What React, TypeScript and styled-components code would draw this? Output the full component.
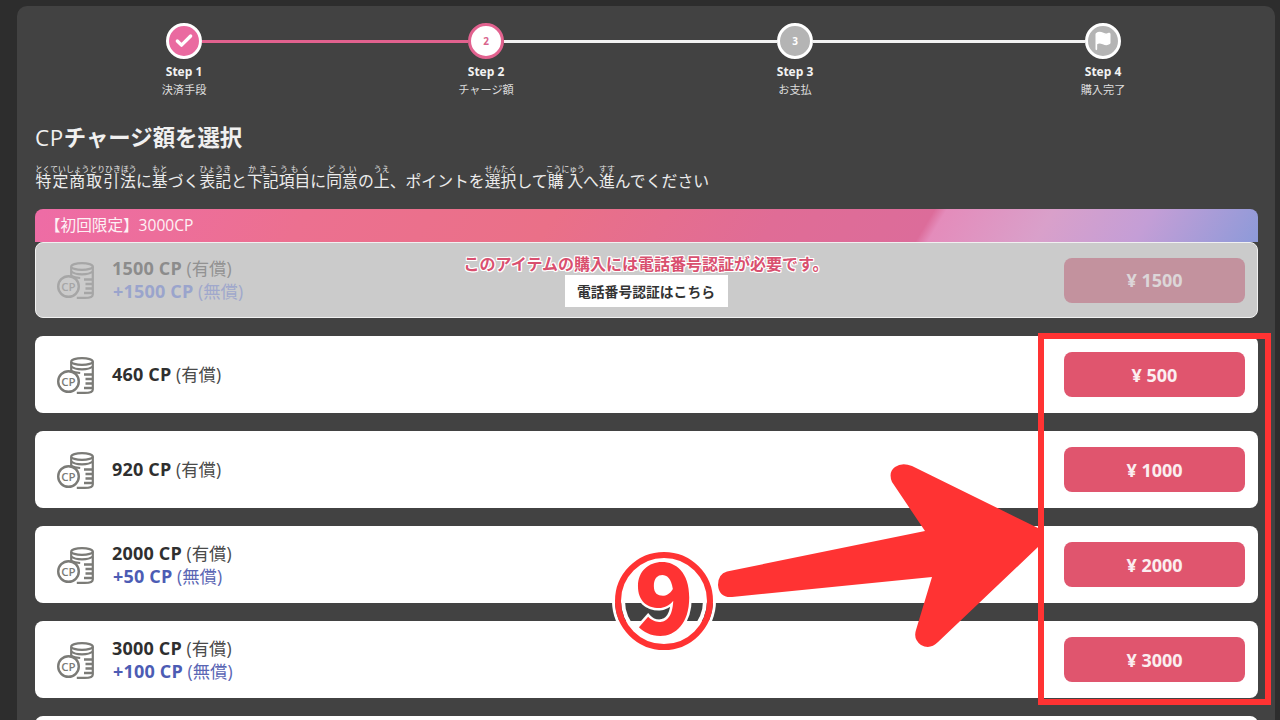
import * as React from 'react'
import styled, { createGlobalStyle } from 'styled-components'
import { Check, Flag } from 'lucide-react'

const FONT = `"Open Sans", "Noto Sans CJK JP", sans-serif`

const GlobalStyle = createGlobalStyle`
  html, body {
    margin: 0;
    height: 720px;
    overflow: hidden;
    background: #2d2d2d;
    font-family: ${FONT};
  }
`

const Page = styled.div`
  position: relative;
  width: 1280px;
  height: 720px;
  overflow: hidden;
  padding: 6px 5px 0 17px;
  box-sizing: border-box;
`

const Panel = styled.main`
  background: #424242;
  border-radius: 10px 10px 0 0;
  padding: 17px 17px 0 19px;
  height: 800px;
  color: #fff;
`

const Stepper = styled.div`
  display: flex;
  padding-left: 130px;
  height: 76px;
`

const StepItem = styled.div`
  width: 36px;
  flex: none;
  display: flex;
  flex-direction: column;
  align-items: center;
`

const Circle = styled.div<{ $kind: 'done' | 'active' | 'todo' }>`
  width: 36px;
  height: 36px;
  flex: none;
  box-sizing: border-box;
  border-radius: 50%;
  border: 3px solid ${p => (p.$kind === 'active' ? '#e2628f' : '#fff')};
  background: ${p => (p.$kind === 'done' ? '#ea6aa0' : p.$kind === 'active' ? '#fff' : '#b4b4b4')};
  color: ${p => (p.$kind === 'active' ? '#d9648c' : '#fff')};
  display: flex;
  align-items: center;
  justify-content: center;
  font-size: 10px;
  font-weight: 700;
`

const StepName = styled.div`
  margin-top: 5px;
  font-size: 12px;
  line-height: 16px;
  font-weight: 700;
  white-space: nowrap;
  color: #f2f2f2;
`

const StepSub = styled.div`
  margin-top: 3px;
  font-size: 11.2px;
  line-height: 14px;
  white-space: nowrap;
  color: #dedede;
`

const Connector = styled.div<{ $done?: boolean; $width: number }>`
  width: ${p => p.$width}px;
  flex: none;
  height: 3px;
  margin-top: 17px;
  background: ${p => (p.$done ? '#e2628f' : '#f2f2f2')};
`

const Title = styled.h1`
  margin: 24px 0 0 -1px;
  font-size: 22.4px;
  line-height: 30px;
  font-weight: 700;
  color: #f0f0f0;
`

const TitleLatin = styled.span`
  font-weight: 500;
  letter-spacing: 0.6px;
`

const Lead = styled.p`
  margin: 12px 0 0;
  font-size: 15.85px;
  line-height: 26px;
  color: #ececec;
  white-space: nowrap;
  margin-left: -1px;

  rt {
    font-size: 7.85px;
    line-height: 9px;
    color: #e6e6e6;
  }
`

const List = styled.div`
  margin: 15px 0 0 -1px;
  width: 1223px;
  display: flex;
  flex-direction: column;
`

const PromoHead = styled.div`
  height: 33px;
  box-sizing: border-box;
  padding: 6px 10px 0;
  border-radius: 8px 8px 0 0;
  font-size: 15.6px;
  line-height: 20px;
  color: #fdf1f5;
  background: linear-gradient(
    121deg,
    #ee6ca6 0%,
    #ec7090 22%,
    #ea7088 42%,
    #e06c96 60%,
    #dc6c9a 72.4%,
    #e48cbb 73.4%,
    #d9a0ca 82%,
    #c49ed6 90%,
    #8d9ad9 100%
  );
`

const Card = styled.div<{ $locked?: boolean }>`
  position: relative;
  height: ${p => (p.$locked ? '76px' : '77px')};
  flex: none;
  box-sizing: border-box;
  margin-bottom: 18px;
  padding: ${p => (p.$locked ? '0 12px 0 21px' : '0 13px 0 22px')};
  display: flex;
  align-items: center;
  border-radius: 8px;
  background: ${p => (p.$locked ? '#cbcbcb' : '#fff')};
  border: ${p => (p.$locked ? '1px solid #f1f1f1' : 'none')};
  color: ${p => (p.$locked ? '#a6a6a6' : '#7b7b77')};
`

const CoinIcon = styled.svg`
  width: 37px;
  height: 37px;
  flex: none;
  margin-top: 1px;
`

const Amounts = styled.div`
  margin-left: 18px;
  flex: 1;
  font-size: 17.4px;
  line-height: 23px;

  b {
    font-size: 18px;
    letter-spacing: 0.2px;
    font-weight: 700;
  }
`

const Paid = styled.div<{ $locked?: boolean }>`
  color: ${p => (p.$locked ? '#929292' : '#4a4a4a')};

  b {
    color: ${p => (p.$locked ? '#8c8c8c' : '#2f2f2f')};
  }
`

const Free = styled.div<{ $locked?: boolean }>`
  padding-left: 1px;
  color: ${p => (p.$locked ? '#a0a8cc' : '#5a66b4')};

  b {
    color: ${p => (p.$locked ? '#9aa4cc' : '#4c5cb4')};
  }
`

const PriceButton = styled.button<{ $locked?: boolean }>`
  width: 181px;
  height: 45px;
  flex: none;
  border: none;
  border-radius: 8px;
  font-family: ${FONT};
  font-size: 18px;
  font-weight: 700;
  background: ${p => (p.$locked ? '#c3929e' : '#e0556e')};
  color: ${p => (p.$locked ? '#dcd6d8' : '#fbeef0')};
`

const LockNotice = styled.div`
  position: absolute;
  top: 10px;
  left: 0;
  right: 0;
  padding-right: 1px;
  display: flex;
  flex-direction: column;
  align-items: center;
`

const LockText = styled.div`
  font-size: 16px;
  line-height: 23px;
  font-weight: 700;
  color: #d9506f;
  text-shadow: 1px 0 0 #fff, -1px 0 0 #fff, 0 1px 0 #fff, 0 -1px 0 #fff, 1px 1px 0 #fff, -1px -1px 0 #fff, 1px -1px 0 #fff, -1px 1px 0 #fff;
`

const VerifyButton = styled.button`
  margin-top: -1px;
  width: 163px;
  height: 32px;
  border: none;
  background: #fff;
  font-family: ${FONT};
  font-size: 13.8px;
  font-weight: 700;
  color: #333;
`

const Annotations = styled.svg`
  position: absolute;
  inset: 0;
  width: 1280px;
  height: 720px;
  pointer-events: none;
`

const RedFrame = styled.div`
  position: absolute;
  left: 1038px;
  top: 333px;
  width: 233px;
  height: 372px;
  box-sizing: border-box;
  border: 6px solid #ff3333;
`

const NumberBadge = styled.div`
  position: absolute;
  left: 615px;
  top: 552px;
  width: 98px;
  height: 98px;
  box-sizing: border-box;
  padding-bottom: 18px;
  border-radius: 50%;
  border: 6px solid #ff3333;
  box-shadow: 0 0 0 3px #fff, inset 0 0 0 4px #fff;
  display: flex;
  align-items: center;
  justify-content: center;
  font-family: "Noto Sans CJK JP", sans-serif;
  font-size: 98px;
  line-height: 86px;
  font-weight: 900;
  color: #ff3333;
  -webkit-text-stroke: 5px #fff;
  paint-order: stroke fill;
`

const Coins = ({ locked }: { locked?: boolean }) => (
  <CoinIcon viewBox="0 0 37 37" fill="none" stroke="currentColor" strokeWidth="2.2">
    <ellipse cx="25" cy="4.5" rx="10.8" ry="3.4" />
    <path d="M14.2 5v9M35.8 4.5v28c0 2-3 3.4-8 3.4h-8" />
    <path d="M14.2 9.5c2 1.8 6 2.8 10.8 2.8 4.8 0 8.8-1 10.8-2.8M14.2 14c2 1 5 1.8 9 2" />
    <path d="M27 17.5h9M28.5 22h7.5M28.5 26.5h7.5M27 31h9" strokeWidth="2.4" />
    <circle cx="11.5" cy="24.5" r="10.3" fill={locked ? '#cbcbcb' : '#fff'} strokeWidth="2.4" />
    <text x="11.5" y="28.6" textAnchor="middle" fontSize="11.5" fontFamily="Open Sans" fill="currentColor" stroke="none" fontWeight="600">CP</text>
  </CoinIcon>
)

type Plan = { paid: number; free?: number; price: number }

const plans: Plan[] = [
  { paid: 460, price: 500 },
  { paid: 920, price: 1000 },
  { paid: 2000, free: 50, price: 2000 },
  { paid: 3000, free: 100, price: 3000 }
]

const PlanBody = ({ plan, locked }: { plan: Plan; locked?: boolean }) => (
  <>
    <Coins locked={locked} />
    <Amounts>
      <Paid $locked={locked}><b>{plan.paid} CP</b> (有償)</Paid>
      {plan.free ? <Free $locked={locked}><b>+{plan.free} CP</b> (無償)</Free> : null}
    </Amounts>
    <PriceButton $locked={locked}>¥ {plan.price}</PriceButton>
  </>
)

const App: React.FC = () => {
  return (
    <Page>
      <GlobalStyle />
      <Panel>
        <Stepper>
          <StepItem>
            <Circle $kind="done"><Check size={20} strokeWidth={4} /></Circle>
            <StepName>Step 1</StepName>
            <StepSub>決済手段</StepSub>
          </StepItem>
          <Connector $done $width={266} />
          <StepItem>
            <Circle $kind="active">2</Circle>
            <StepName>Step 2</StepName>
            <StepSub>チャージ額</StepSub>
          </StepItem>
          <Connector $width={273} />
          <StepItem>
            <Circle $kind="todo">3</Circle>
            <StepName>Step 3</StepName>
            <StepSub>お支払</StepSub>
          </StepItem>
          <Connector $width={272} />
          <StepItem>
            <Circle $kind="todo"><Flag size={20} fill="#fff" strokeWidth={2} /></Circle>
            <StepName>Step 4</StepName>
            <StepSub>購入完了</StepSub>
          </StepItem>
        </Stepper>
        <Title><TitleLatin>CP</TitleLatin>チャージ額を選択</Title>
        <Lead>
          <ruby>特定商取引法<rt>とくていしょうとりひきほう</rt></ruby>に
          <ruby>基<rt>もと</rt></ruby>づく
          <ruby>表記<rt>ひょうき</rt></ruby>と
          <ruby>下記項目<rt>かきこうもく</rt></ruby>に
          <ruby>同意<rt>どうい</rt></ruby>の
          <ruby>上<rt>うえ</rt></ruby>、ポイントを
          <ruby>選択<rt>せんたく</rt></ruby>して
          <ruby>購入<rt>こうにゅう</rt></ruby>へ
          <ruby>進<rt>すす</rt></ruby>んでください
        </Lead>
        <List>
          <PromoHead>【初回限定】3000CP</PromoHead>
          <Card $locked>
            <PlanBody plan={{ paid: 1500, free: 1500, price: 1500 }} locked />
            <LockNotice>
              <LockText>このアイテムの購入には電話番号認証が必要です。</LockText>
              <VerifyButton>電話番号認証はこちら</VerifyButton>
            </LockNotice>
          </Card>
          {plans.map(plan => (
            <Card key={plan.paid}>
              <PlanBody plan={plan} />
            </Card>
          ))}
          <Card />
        </List>
      </Panel>
      <RedFrame />
      <Annotations viewBox="0 0 1280 720">
        <path
          fill="#ff3333"
          d="M727 571.5L925 531L892 482Q888 472 895 467Q902 462 912 466L1038 528L1038 547L938 642Q930 650 921 645Q913 639 916 630L932 577L732 597Q719 598 718 585Q718 574 727 571.5Z"
        />
      </Annotations>
      <NumberBadge>9</NumberBadge>
    </Page>
  )
}

export default App
